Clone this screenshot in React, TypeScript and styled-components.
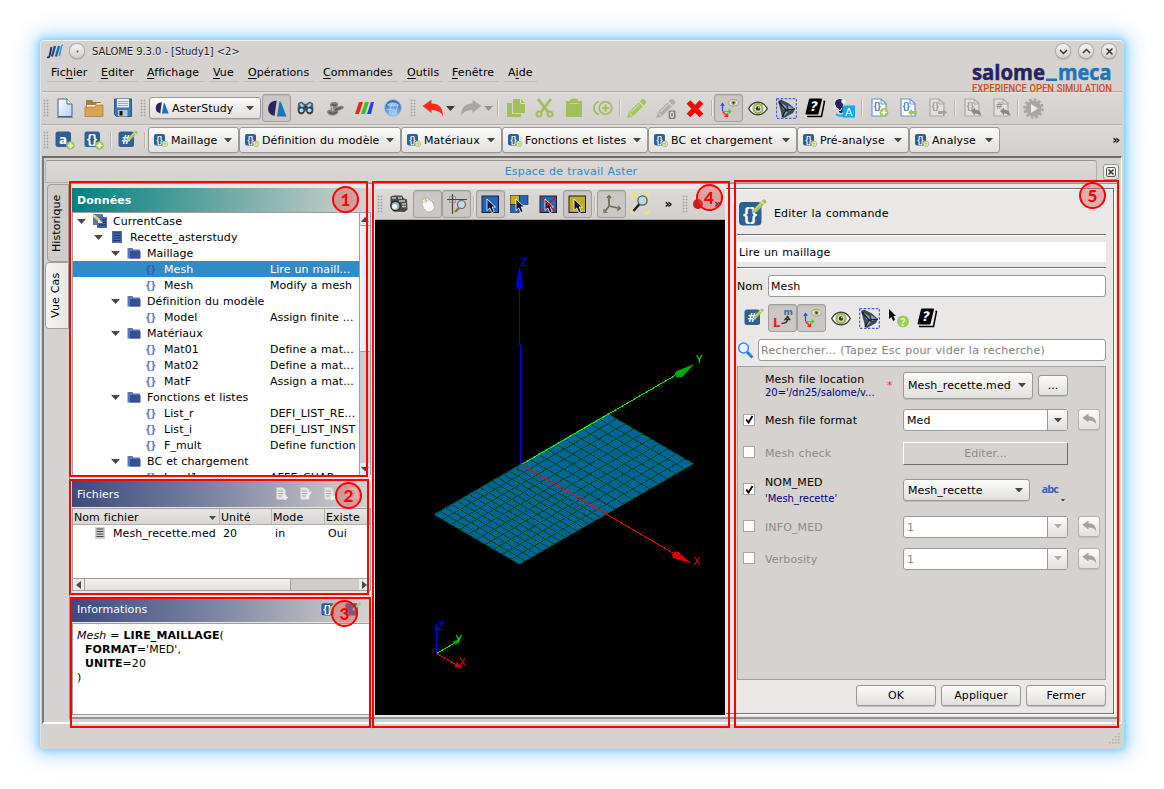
import React from "react";
import styled, { createGlobalStyle, css } from "styled-components";

const Global = createGlobalStyle`
  * { box-sizing: border-box; }
  html, body { margin: 0; padding: 0; background: #fff; }
  body { font-family: "DejaVu Sans", sans-serif; font-size: 11px; letter-spacing: 0.07px; word-spacing: 0.4px; color: #000; overflow: hidden; }
`;

const Page = styled.div`
  position: relative;
  width: 1164px;
  height: 789px;
  padding: 40px 39px 40px 40px;
  overflow: hidden;
`;

const Window = styled.div`
  width: 1084px;
  height: 709px;
  background: #d6d2cf;
  border-radius: 5px;
  display: flex;
  flex-direction: column;
  padding: 0 2px;
  box-shadow: inset 0 1px 0 #f4f3f2, inset 1px 0 0 #e4e2e0, 0 0 5px 1px #80cffc, 0 0 12px 4px #a9dffe, 0 0 24px 10px #dfecff;
`;

const TitleBar = styled.div`
  height: 22px;
  display: flex;
  align-items: center;
  padding: 0 6px 0 5px;
  flex: none;
`;

const TitleText = styled.span`
  font-size: 10px;
  letter-spacing: -0.06px;
  word-spacing: 0;
  margin-left: 8px;
  flex: 1;
  text-shadow: 0 1px 1px #fff;
  color: #222;
  white-space: pre;
`;

const RoundButton = styled.span`
  width: 14px;
  height: 14px;
  border-radius: 50%;
  margin-left: 9px;
  background: linear-gradient(#f6f5f4, #d3d0cd);
  box-shadow: 0 0 0 1px #b0adaa, 0 1px 2px #777;
  display: flex;
  align-items: center;
  justify-content: center;
  &:first-of-type { margin-left: 7px; }
`;

const HeaderArea = styled.div`
  height: 29px;
  flex: none;
  display: flex;
  justify-content: space-between;
  padding: 0 9px 0 5px;
`;

const MenuBar = styled.div`
  display: flex;
  gap: 5px;
  height: 20px;
`;

const MenuItem = styled.span<{ $w: number }>`
  width: ${(p) => p.$w}px;
  padding-left: 4px;
  line-height: 21px;
  border-bottom: 1px solid #c0bcb9;
  white-space: pre;
  u { text-underline-offset: 2px; }
`;

const ToolBar = styled.div<{ $h: number; $lift?: number }>`
  height: ${(p) => p.$h}px;
  padding-bottom: ${(p) => p.$lift ?? 0}px;
  flex: none;
  display: flex;
  align-items: center;
  border-top: 1px solid #b0adaa;
  box-shadow: inset 0 1px 0 #e6e4e2;
  background: linear-gradient(#dbd8d5, #d3cfcc);
`;

const Handle = styled.span<{ $w: number }>`
  width: ${(p) => p.$w}px;
  height: 18px;
  flex: none;
  background-image: radial-gradient(circle, #a29e9b 0.8px, transparent 1.1px);
  background-size: 3px 3px;
  background-clip: content-box;
  background-origin: content-box;
  padding: 0 ${(p) => (p.$w - 6) / 2}px;
`;

const Slot = styled.span<{ $on?: boolean; $w?: number }>`
  width: ${(p) => p.$w ?? 29}px;
  height: 28px;
  flex: none;
  display: flex;
  align-items: center;
  justify-content: center;
  border-radius: 3px;
  ${(p) =>
    p.$on &&
    css`
      border: 1px solid #a09d9a;
      background: #cac7c5;
      box-shadow: inset 0 1px 1px #bbb7b4;
    `}
`;

const Sep = styled.span<{ $w: number }>`
  width: ${(p) => p.$w}px;
  height: 16px;
  flex: none;
  display: flex;
  justify-content: center;
  &::before {
    content: "";
    width: 2px;
    background: linear-gradient(90deg, #b8b4b1 50%, #eceae9 50%);
  }
`;

const Gap = styled.span<{ $w: number }>`
  width: ${(p) => p.$w}px;
  flex: none;
`;

const raised = css`
  background: linear-gradient(#fbfbfa, #e2e0de);
  border: 1px solid #9a9794;
  border-radius: 3px;
  box-shadow: 0 1px 0 #c0bcb9;
`;

const Combo = styled.div<{ $w: number; $h: number }>`
  ${raised}
  width: ${(p) => p.$w}px;
  height: ${(p) => p.$h}px;
  flex: none;
  display: flex;
  align-items: center;
  justify-content: space-between;
  padding: 0 6px 0 4px;
  white-space: pre;
`;

const ComboLabel = styled.span`
  display: flex;
  align-items: center;
  gap: 3px;
  padding-left: 1px;
`;

const More = styled.span`
  font-weight: bold;
  font-size: 12px;
  line-height: 14px;
`;

const Frame = styled.div`
  flex: none;
  height: 568px;
  width: 1080px;
  border-top: 2px solid #6d6c69;
  border-left: 2px solid #7b7977;
  border-bottom: 2px solid #fff;
  border-right: 1px solid #fff;
  display: flex;
  flex-direction: column;
  padding: 2px 2px 0 1px;
`;

const TitleRow = styled.div`
  height: 23px;
  flex: none;
  display: flex;
  align-items: center;
  gap: 6px;
`;

const WorkspaceTab = styled.div`
  width: 1052px;
  height: 23px;
  border: 1px solid #b0adaa;
  border-top-color: #98948f;
  border-radius: 3px 3px 0 0;
  background: linear-gradient(#dcd9d6, #d4d0cd);
  color: #2f8bc6;
  text-align: center;
  line-height: 21px;
  letter-spacing: 0.18px;
`;

const CloseBox = styled.span`
  ${raised}
  width: 16px;
  height: 16px;
  display: flex;
  align-items: center;
  justify-content: center;
`;

const WorkspaceBody = styled.div`
  flex: 1;
  display: flex;
  min-height: 0;
`;

const TabColumn = styled.div`
  width: 24px;
  display: flex;
  flex-direction: column;
  align-items: flex-end;
  padding-top: 1px;
`;

const SideTab = styled.div<{ $h: number; $active?: boolean }>`
  width: ${(p) => (p.$active ? 24 : 22)}px;
  height: ${(p) => p.$h}px;
  border: 1px solid #a09d9a;
  border-radius: 0 4px 4px 0;
  background: ${(p) => (p.$active ? "linear-gradient(90deg, #e9e8e6, #f5f4f3)" : "#cfccc9")};
  writing-mode: vertical-rl;
  transform: rotate(180deg);
  text-align: center;
  line-height: ${(p) => (p.$active ? 20 : 18)}px;
  letter-spacing: 0.1px;
`;

const Workspace = styled.div`
  width: 1051px;
  height: 536px;
  border: 1px solid #98948f;
  border-bottom-width: 2px;
  background: #e9e8e6;
  display: flex;
`;

const LeftColumn = styled.div`
  width: 301px;
  flex: none;
  padding: 4px 0 0 2px;
  display: flex;
  flex-direction: column;
`;

const DockHeader = styled.div<{ $from: string; $h: number; $bold?: boolean; $mid?: string }>`
  height: ${(p) => p.$h}px;
  flex: none;
  width: 299px;
  background: linear-gradient(90deg, ${(p) => p.$from}, ${(p) => p.$mid} 50%, #d6d2cf);
  color: #fff;
  font-weight: ${(p) => (p.$bold ? "bold" : "normal")};
  display: flex;
  align-items: center;
  justify-content: space-between;
  padding: 0 10px 0 5px;
`;

const HeaderIcons = styled.span<{ $gap: number }>`
  display: flex;
  gap: ${(p) => p.$gap}px;
  align-items: center;
`;

const Tree = styled.div`
  height: 263px;
  width: 299px;
  flex: none;
  border: 1px solid #a09d9a;
  border-bottom: none;
  display: flex;
  background: #fff;
  overflow: hidden;
`;

const TreeRows = styled.div`
  flex: 1;
`;

const TreeRow = styled.div<{ $selected?: boolean; $level: number }>`
  display: flex;
  align-items: center;
  height: 16px;
  width: 286px;
  padding-left: ${(p) => 3 + p.$level * 17}px;
  background: ${(p) => (p.$selected ? "#308cc6" : "transparent")};
  color: ${(p) => (p.$selected ? "#fff" : "#000")};
  white-space: pre;
`;

const TreeArrow = styled.span`
  width: 11px;
  flex: none;
  display: flex;
  justify-content: center;
`;

const TreeIcon = styled.span`
  width: 26px;
  flex: none;
  display: flex;
  justify-content: center;
`;

const TreeText = styled.span<{ $level: number }>`
  width: ${(p) => 157 - p.$level * 17}px;
  flex: none;
`;

const VScroll = styled.div`
  width: 11px;
  flex: none;
  border-left: 1px solid #a09d9a;
  background: #cfccc9;
  display: flex;
  flex-direction: column;
`;

const ScrollEnd = styled.span`
  height: 12px;
  flex: none;
  background: #eceae9;
  display: flex;
  align-items: center;
  justify-content: center;
`;

const VThumb = styled.span`
  height: 127px;
  border: solid #a09d9a;
  border-width: 1px 0;
  background: linear-gradient(90deg, #f6f5f4, #e2e0de);
`;

const Spacer = styled.span`
  flex: 1;
`;

const Splitter = styled.div`
  height: 6px;
  flex: none;
  display: flex;
  align-items: center;
  justify-content: center;
  &::before {
    content: "";
    width: 18px;
    height: 3px;
    background-image: radial-gradient(circle, #a8a5a2 0.7px, transparent 1px);
    background-size: 3px 3px;
  }
`;

const HairGap = styled.div<{ $h: number }>`
  height: ${(p) => p.$h}px;
  flex: none;
`;

const Table = styled.div`
  width: 299px;
  height: 83px;
  flex: none;
  border: 1px solid #a09d9a;
  background: #fff;
  display: flex;
  flex-direction: column;
`;

const TableHead = styled.div`
  height: 16px;
  display: flex;
  line-height: 18px;
  background: linear-gradient(#e8e6e4, #d8d5d2);
  border-bottom: 1px solid #b0adaa;
`;

const HeadCell = styled.span<{ $w: number }>`
  width: ${(p) => p.$w}px;
  border-right: 1px solid #b8b5b2;
  padding: 0 3px 0 1px;
  display: flex;
  justify-content: space-between;
  white-space: pre;
  svg { margin-top: 7px; }
`;

const TableRow = styled.div`
  height: 16px;
  display: flex;
  align-items: center;
  white-space: pre;
`;

const Cell = styled.span<{ $w: number; $pad: number; $gap?: number }>`
  width: ${(p) => p.$w}px;
  flex: none;
  padding-left: ${(p) => p.$pad}px;
  display: flex;
  align-items: center;
  gap: ${(p) => p.$gap ?? 0}px;
`;

const HScroll = styled.div`
  height: 12px;
  margin-top: auto;
  display: flex;
  border-top: 1px solid #a09d9a;
  background: #cfccc9;
`;

const HEnd = styled.span`
  width: 11px;
  background: #eceae9;
  display: flex;
  align-items: center;
  justify-content: center;
`;

const HThumb = styled.span`
  width: 207px;
  border: solid #a09d9a;
  border-width: 0 1px;
  background: linear-gradient(#f3f2f1, #e2e0de);
`;

const InfoBox = styled.div`
  width: 299px;
  height: 92px;
  border: 1px solid #a09d9a;
  background: #fff;
  padding: 5px 4px;
  line-height: 14px;
  white-space: pre;
`;

const ViewColumn = styled.div`
  width: 354px;
  flex: none;
  padding: 5px 0 0 4px;
`;

const ViewBar = styled.div`
  width: 350px;
  height: 31px;
  display: flex;
  align-items: center;
  background: linear-gradient(#dcd9d6, #d3cfcc);
  border-bottom: 1px solid #a8a5a2;
`;

const FormFrame = styled.div`
  width: 388px;
  height: 526px;
  margin: 4px 0 0 1px;
  border: solid #74716f;
  border-width: 1px 1px 1px 0;
  box-shadow: inset 0 1px 0 #fff, 1px 1px 0 #fff;
  padding: 9px 7px 0 11px;
`;

const EditorHead = styled.div`
  height: 36px;
  display: flex;
  gap: 5px;
  padding-left: 1px;
  line-height: 32px;
  letter-spacing: 0.15px;
`;

const Rule = styled.div`
  height: 2px;
  border-top: 1px solid #6f6c6a;
  background: #fff;
`;

const Description = styled.div`
  height: 20px;
  margin: 6px 0 5px;
  background: #fff;
  padding-left: 2px;
  line-height: 22px;
  letter-spacing: 0.15px;
`;

const FieldRow = styled.div<{ $mt: number }>`
  display: flex;
  align-items: center;
  justify-content: space-between;
  height: 22px;
  margin-top: ${(p) => p.$mt}px;
`;

const Input = styled.div<{ $w: number; $muted?: boolean }>`
  width: ${(p) => p.$w}px;
  height: 22px;
  border: 1px solid #9a9794;
  border-radius: 3px;
  background: #fff;
  padding-left: 2px;
  line-height: 21px;
  color: ${(p) => (p.$muted ? "#808080" : "#000")};
  letter-spacing: ${(p) => (p.$muted ? 0.26 : 0.09)}px;
  white-space: pre;
`;

const IconRow = styled.div`
  display: flex;
  height: 28px;
  margin-top: 7px;
  padding-left: 2px;
`;

const Params = styled.div`
  height: 314px;
  margin-top: 5px;
  border: 1px solid #a3a09e;
  background: #d6d2cf;
`;

const ParamRow = styled.div<{ $h: number; $muted?: boolean }>`
  height: ${(p) => p.$h}px;
  display: grid;
  grid-template-columns: 27px 118px 20px 165px 32px;
  align-items: center;
  color: ${(p) => (p.$muted ? "#8d8a88" : "#000")};
`;

const Check = styled.span`
  width: 12px;
  height: 12px;
  margin: 0 0 2px 5px;
  border: 1px solid #a8a5a2;
  background: #fff;
  display: flex;
  align-items: center;
  justify-content: center;
`;

const ParamLabel = styled.span<{ $gap?: number }>`
  display: flex;
  flex-direction: column;
  gap: ${(p) => p.$gap ?? 0}px;
  white-space: pre;
  letter-spacing: 0.12px;
`;

const SubLabel = styled.span`
  color: #000080;
  font-size: 10px;
  line-height: 13px;
  letter-spacing: -0.03px;
`;

const Star = styled.span`
  color: #ff2a2a;
  justify-self: start;
  padding-left: 4px;
`;

const Control = styled.span`
  display: flex;
  align-items: center;
  justify-content: space-between;
`;

const EditCombo = styled.div`
  width: 165px;
  height: 22px;
  margin-bottom: 1px;
  border: 1px solid #9a9794;
  border-radius: 3px;
  background: #fff;
  padding-left: 3px;
  display: flex;
  justify-content: space-between;
  line-height: 21px;
`;

const DropEnd = styled.span`
  width: 20px;
  border-left: 1px solid #9a9794;
  background: linear-gradient(#fbfbfa, #e2e0de);
  display: flex;
  align-items: center;
  justify-content: center;
`;

const FlatButton = styled.div`
  width: 165px;
  height: 23px;
  border: 1px solid;
  border-color: #fff #6f6c6a #6f6c6a #fff;
  text-align: center;
  line-height: 22px;
`;

const Push = styled.div<{ $w: number; $h?: number }>`
  ${raised}
  width: ${(p) => p.$w}px;
  height: ${(p) => p.$h ?? 21}px;
  display: flex;
  align-items: center;
  justify-content: center;
`;

const UndoBtn = styled(Push)`
  margin: 0 0 2px 10px;
  border-color: #b5b2af;
`;

const Abc = styled.span`
  display: flex;
  align-items: center;
  color: #3a5fc0;
  font: bold 11px/14px "Open Sans", sans-serif;
  letter-spacing: -0.9px;
  padding: 0 3px 3px 0;
`;

const AbcArrow = styled.span`
  height: 20px;
  margin-bottom: -5px;
  display: flex;
  align-items: flex-end;
  padding-left: 3px;
`;

const Buttons = styled.div`
  display: flex;
  justify-content: flex-end;
  gap: 5px;
  margin-top: 5px;
`;

const StatusBar = styled.div`
  flex: 1;
  display: flex;
  justify-content: flex-end;
  align-items: flex-end;
  padding: 0 2px 5px;
`;

const Outline = styled.div<{ $x: number; $y: number; $w: number; $h: number }>`
  position: absolute;
  left: ${(p) => p.$x}px;
  top: ${(p) => p.$y}px;
  width: ${(p) => p.$w}px;
  height: ${(p) => p.$h}px;
  border: 2px solid #f00;
`;

const Badge = styled.div<{ $x: number; $y: number }>`
  position: absolute;
  left: ${(p) => p.$x}px;
  top: ${(p) => p.$y}px;
  width: 27px;
  height: 27px;
  border: 2px solid #f00;
  border-radius: 50%;
  background: rgba(221, 90, 90, 0.42);
  color: #f00;
  font: 900 17px/23px Lato, sans-serif;
  letter-spacing: 0;
  text-align: center;
`;

const Down = ({ s = 8, c = "#4b4846" }: { s?: number; c?: string }) => (
  <svg width={s} height={s / 2 + 0.5} viewBox="0 0 8 4.5"><path d="M0 0h8L4 4.5z" fill={c} /></svg>
);
const SideArrow = ({ left }: { left?: boolean }) => (
  <svg width="5" height="8" viewBox="0 0 5 8"><path d={left ? "M5 0v8L0 4z" : "M0 0v8l5-4z"} fill="#4b4846" /></svg>
);

const glyphFont = '"DejaVu Sans", sans-serif';
const braceFont = '"Liberation Sans", sans-serif';
const fontFor = (ch: string) => (ch === "{}" ? braceFont : glyphFont);

const Pencil = ({ c = "#a4c557" }: { c?: string }) => (
  <g fill={c}>
    <path d="M1 19l1.400-5.200L12 4.200 15.900 8 6.200 17.600z" />
    <path d="M13 3.200l2-2q1.200-.8 2.400.3l1.400 1.400q1 1.200.1 2.300l-2 2z" />
    <path d="M3 14l3 3M5 13.500l8-8" stroke="#e6efcf" strokeWidth=".9" fill="none" />
  </g>
);

const BlueBox = ({ s = 20, ch, mark }: { s?: number; ch: string; mark: "plus" | "pencil" }) => (
  <svg width={s} height={s} viewBox="0 0 20 20">
    <rect x=".5" y="1.500" width="15.500" height="15.500" rx="2.500" fill="#2f6094" />
    <text x="8" y={ch === "{}" ? 13.3 : 13.5} textAnchor="middle" fontFamily={fontFor(ch)} fontWeight="bold" fontSize={ch === "{}" ? 13 : 12} fill="#fff" letterSpacing="0">{ch}</text>
    {mark === "plus" ? (
      <g><circle cx="15.500" cy="15.500" r="4.300" fill="#a4c557" /><path d="M15.500 12.800v5.400M12.800 15.500h5.400" stroke="#fff" strokeWidth="1.600" /></g>
    ) : (
      <g transform="translate(8.500 0) scale(.58)"><Pencil /></g>
    )}
  </svg>
);

const SmallAdd = () => (
  <svg width="14" height="14" viewBox="0 0 14 14">
    <rect x="0" y="1" width="11" height="11.500" rx="2" fill="#2f6094" />
    <text x="5.500" y="9.500" textAnchor="middle" fontFamily={braceFont} fontWeight="bold" fontSize="9.500" textLength="6" lengthAdjust="spacingAndGlyphs" fill="#fff" letterSpacing="0">{"{}"}</text>
    <circle cx="11" cy="10.800" r="2.700" fill="#f2f6e6" stroke="#a4c557" strokeWidth="1" /><path d="M11 9.300v3M9.500 10.800h3" stroke="#a4c557" />
  </svg>
);

const AsterLogo = ({ s = 20 }: { s?: number }) => (
  <svg width={s} height={s * 0.85} viewBox="0 0 20 17">
    <path d="M9.700 .5L7.500 16Q1 14.500 1 8.500 1.500 1 9.700 .5z" fill="#2a2360" />
    <path d="M10 16.500L12.500 1q1 0 2 2.500L19.500 16.500z" fill="#1b75bb" />
  </svg>
);
const NewDoc = () => (
  <svg width="16" height="20" viewBox="0 0 16 20"><defs><linearGradient id="nd" x1="0" y1="0" x2="1" y2="1"><stop offset="0" stopColor="#fff" /><stop offset="1" stopColor="#b5cff5" /></linearGradient></defs><path d="M1 1h9l5 5v12.500H1z" fill="url(#nd)" stroke="#3d5f94" /><path d="M10 1v5h5" fill="#fff" stroke="#3d5f94" /><path d="M0 19.500h16" stroke="#888" /></svg>
);
const Folder = () => (
  <svg width="20" height="19" viewBox="0 0 20 19"><path d="M2 1h6l1.500 2H17v14H2z" fill="#a87a3c" /><path d="M3 6h9l1-2h4v4H3z" fill="#fff4da" /><path d="M1 8h10l1.500-2H19v11.500H1z" fill="#dba454" stroke="#a87a3c" strokeWidth=".7" /></svg>
);
const Floppy = () => (
  <svg width="18" height="20" viewBox="0 0 18 20"><path d="M.5 1h17v17.500H2.500L.5 16.500z" fill="#3f78b4" stroke="#2a527f" /><rect x="3" y="1" width="12" height="8.500" fill="#e7eef6" /><path d="M4 3.500h10M4 5.500h10M4 7.500h10" stroke="#7e9cbd" strokeWidth=".8" /><rect x="4" y="12" width="9.500" height="6.500" fill="#b9c3cd" /><rect x="5.500" y="13" width="3" height="4.500" fill="#111" /></svg>
);
const Binoculars = () => (
  <svg width="17" height="14" viewBox="0 0 18 15"><path d="M1 2.500L4.500.5 8 3h2l3.500-2.500L17 2.500l.5 7q0 5-4 5-3 0-3.500-3.500H8Q7.500 14.500 4.500 14.500.5 14.500.5 9.500z" fill="#49626f" /><circle cx="4.700" cy="10" r="2.900" fill="#a5dcf8" stroke="#24333c" strokeWidth="1.200" /><circle cx="13.300" cy="10" r="2.900" fill="#a5dcf8" stroke="#24333c" strokeWidth="1.200" /><path d="M3.500 3l3 3M14.500 3l-3 3" stroke="#8fd3f6" strokeWidth="2.600" /><path d="M8 6.500h2" stroke="#1a2328" strokeWidth="2" /></svg>
);
const Geometry = () => (
  <svg width="18" height="15" viewBox="0 0 18 15"><path d="M1 11q0-2.500 4-2.500L4 3q1-2.500 5-2t3 3L11 6l5-1.500q2.500 1 1.500 3L12 10q1 3-4 4.500-6 .5-7-3.500z" fill="#83807e" /><path d="M3 11q3 3 8 0M5.500 3.500q3 1.500 5 0M9 9l6-2.500" stroke="#5a5755" strokeWidth="1.400" fill="none" /><path d="M6 5l1 5" stroke="#b9b6b4" strokeWidth="1.500" /></svg>
);
const Stripes = () => (
  <svg width="20" height="14" viewBox="0 0 20 14"><path d="M1 13L5 1h4L5 13z" fill="#f02020" /><path d="M7 13l4-12h4l-4 12z" fill="#3bc41e" /><path d="M13 13l4-12h3l-3 12z" fill="#2342f0" /></svg>
);
const Globe = () => (
  <svg width="18" height="18" viewBox="0 0 18 18"><defs><radialGradient id="gl" cx=".5" cy=".85" r=".9"><stop offset="0" stopColor="#a9d6fb" /><stop offset=".7" stopColor="#3d7cc8" /><stop offset="1" stopColor="#2c5fae" /></radialGradient></defs><circle cx="9" cy="9" r="8.300" fill="url(#gl)" stroke="#8db4de" strokeWidth=".8" /><path d="M2.500 6Q9 .5 15.500 6 9 9 2.500 6z" fill="#dcecfa" opacity=".6" /><path d="M8 4l-2 6 6 2 2-6M6 10l-4 1M12 12l0 4M6 10l0 5" fill="none" stroke="#e4f0fb" strokeWidth=".5" /></svg>
);
const FlipSvg = styled.svg<{ $flip?: boolean }>`
  transform: ${(p) => (p.$flip ? "scaleX(-1)" : "none")};
`;
const Undo = ({ c = "#ff2a1a", s = 22, flip }: { c?: string; s?: number; flip?: boolean }) => (
  <FlipSvg $flip={flip} width={s} height={s * 0.82} viewBox="0 0 22 18"><path d="M.5 7L9.500.8v3.800q11.500 0 11.500 13-2.500-6.800-11.500-6.600V14z" fill={c} /></FlipSvg>
);
const Copy = () => (
  <svg width="20" height="20" viewBox="0 0 20 20"><path d="M7 1h8l4 4v10H7z" fill="#a3be5c" /><path d="M1 5h5v11h9v3H1z" fill="#a3be5c" /><path d="M14.500 1v4.500H19" fill="none" stroke="#dcd9d6" /></svg>
);
const Cut = () => (
  <svg width="19" height="20" viewBox="0 0 19 20" fill="none" stroke="#a3be5c"><path d="M3 1l10 13M16 1L6 14" strokeWidth="2.800" /><circle cx="4" cy="16" r="2.500" strokeWidth="2" /><circle cx="15" cy="16" r="2.500" strokeWidth="2" /></svg>
);
const Paste = () => (
  <svg width="18" height="20" viewBox="0 0 18 20"><path d="M1 3h4V1.500Q9-.5 13 1.500V3h4v16H1z" fill="#a3be5c" /><path d="M4.500 5.500h9" stroke="#c7d79a" /></svg>
);
const Duplicate = () => (
  <svg width="20" height="16" viewBox="0 0 20 16" fill="none" stroke="#a3be5c"><circle cx="12.500" cy="8" r="6.300" strokeWidth="1.800" /><path d="M12.500 4.500v7M9 8h7" strokeWidth="2.200" /><path d="M6 1.500Q1 3 1 8t5 6.500" strokeWidth="1.800" /></svg>
);
const PencilIcon = ({ gray }: { gray?: boolean }) => (
  <svg width="21" height="21" viewBox="0 0 20 20"><Pencil c={gray ? "#b1aeac" : "#a4c557"} />{gray && <g><rect x="13" y="12" width="6.500" height="8" rx="1" fill="#83807e" /><ellipse cx="16.200" cy="16" rx="1.400" ry="2.500" fill="none" stroke="#ddd" strokeWidth="1.100" /></g>}</svg>
);
const RedX = () => (
  <svg width="20" height="19" viewBox="0 0 20 19"><path d="M3.500 3l13 13.500M16.500 3l-13 13.500" stroke="#f00a0a" strokeWidth="5.400" /></svg>
);
const AxesEye = () => (
  <svg width="20" height="20" viewBox="0 0 20 20" fill="none"><path d="M3.500 13V6M1.800 7.800l1.700-2.300 1.700 2.300" stroke="#2450f0" strokeWidth="1.200" /><path d="M3.500 13.500H11M9.500 11.500l2.200 2-2.200 2" stroke="#23dd23" strokeWidth="1.200" /><path d="M3.500 13.500l4.300 4.300M8.500 15.200v3H5.500" stroke="#f02a2a" strokeWidth="1.400" /><ellipse cx="14.500" cy="4.800" rx="4.700" ry="3.200" fill="#e8ecdc" stroke="#8a8a80" strokeWidth=".8" /><circle cx="14.500" cy="4.800" r="2.300" fill="#8fae44" /><circle cx="14.500" cy="4.800" r="1" fill="#333" /></svg>
);
const Eye = () => (
  <svg width="20" height="15" viewBox="0 0 20 15"><path d="M.7 7.500Q4 1.200 10 1.200t9.300 6.300Q16 13.800 10 13.800T.7 7.500z" fill="#fff" stroke="#3b3b3b" strokeWidth="1.400" /><circle cx="10" cy="7.500" r="4.600" fill="#dfe8c4" stroke="#9ab84e" strokeWidth="2.200" /><circle cx="10" cy="7.500" r="2.300" fill="#333" /><circle cx="10.800" cy="6.700" r=".8" fill="#fff" /></svg>
);
const MeshSelect = () => (
  <svg width="21" height="21" viewBox="0 0 21 21"><rect x=".7" y=".7" width="19.600" height="19.600" fill="none" stroke="#2545d8" strokeDasharray="2.500 1.500" /><path d="M2 3l3-1.500 8 4 6 5.500-2 4-9 5-2-1-1-5z" fill="#414a54" /><path d="M5 5l5 3 1 4-4-1zM12 7l6 4-5 2zM8 13l4 1-4 4z" fill="#86a9cc" /><path d="M3 4l7 8 9-1M10 12l-4 7" stroke="#15181c" strokeWidth="1.200" fill="none" /></svg>
);
const Book = () => (
  <svg width="21" height="20" viewBox="0 0 21 20"><path d="M5 1.500h11l-3.500 14H1.500z" fill="#000" stroke="#000" strokeLinejoin="round" strokeWidth="2" /><path d="M18.500 3l1 .5-3 15H2" fill="none" stroke="#000" strokeWidth="1.500" /><text x="8.500" y="13.500" textAnchor="middle" fontFamily={glyphFont} fontWeight="bold" fontSize="13" fill="#fff" transform="skewX(-12) translate(2.500 0)">?</text></svg>
);
const Translate = () => (
  <svg width="21" height="20" viewBox="0 0 21 20"><path d="M1 5q1-4 5-4 3 0 3 3v10q-2 2-4 0v-3Q1 9 1 5z" fill="#252160" /><circle cx="9.500" cy="3.500" r="2.200" fill="#f4f6fb" /><path d="M3 10l3 3 2-3M1 7v4" stroke="#f4f6fb" fill="none" /><path d="M2 16q3 3 7 1" stroke="#2ba4ea" fill="none" strokeWidth="2" /><rect x="8.500" y="7.500" width="12.500" height="12" fill="#14a7ee" /><text x="14.800" y="17.500" textAnchor="middle" fontFamily={glyphFont} fontSize="11" fill="#fff">A</text></svg>
);
const DocIcon = ({ ch, mark, gray }: { ch: string; mark: "plus" | "left" | "right" | "reply"; gray?: boolean }) => (
  <svg width="18" height="20" viewBox="0 0 18 20">
    <path d="M1 1h9l5 4.500V18H1z" fill={gray ? "#e2e0df" : "#fff"} stroke={gray ? "#aaa7a5" : "#6b94cb"} strokeWidth="1.200" />
    <path d="M10 1v5h5" fill="none" stroke={gray ? "#aaa7a5" : "#6b94cb"} />
    <text x="6.300" y="10.500" textAnchor="middle" fontFamily={fontFor(ch)} fontSize="9" fontWeight="bold" fill={gray ? "#999694" : "#3d6fb5"} letterSpacing="0">{ch}</text>
    {mark === "plus" && <g><circle cx="13" cy="14.500" r="4.400" fill="#a4c557" /><path d="M13 11.800v5.400M10.300 14.500h5.400" stroke="#fff" strokeWidth="1.500" /></g>}
    {mark === "left" && <path d="M8 14.500l4-3.500v2h5v3h-5v2z" fill="#a4c557" />}
    {mark === "right" && <path d="M18 14.500l-4-3.500v2H9v3h5v2z" fill="#a5a2a0" />}
    {mark === "reply" && <path d="M7 13l4-3.500v2q6 0 6.500 7-2.500-3.500-6.500-3v2z" fill="#8b8886" />}
  </svg>
);
const Gear = () => (
  <svg width="21" height="21" viewBox="0 0 21 21"><circle cx="10.500" cy="10.500" r="9" fill="none" stroke="#a9a6a4" strokeWidth="2.500" strokeDasharray="2.700 2" /><circle cx="10.500" cy="10.500" r="8" fill="#a9a6a4" /><path d="M8 6l7 4.500L8 15z" fill="#ebeae9" /></svg>
);
const Braces = ({ sel }: { sel?: boolean }) => (
  <svg width="12" height="14" viewBox="0 0 12 14"><text x="6" y="10.500" textAnchor="middle" fontFamily={braceFont} fontSize="11.500" fontWeight="bold" fill={sel ? "#2f62b4" : "#5876bd"} letterSpacing="0.5">{"{}"}</text></svg>
);
const FolderBlue = () => (
  <svg width="14" height="12" viewBox="0 0 14 12"><path d="M.5 1h5l1 1.500H13V11.500H.5z" fill="#5a76b8" /><path d="M3 4h10.500v7.500H3z" fill="#34509a" /></svg>
);
const StageIcon = ({ gray }: { gray?: boolean }) => (
  <svg width="12" height="13" viewBox="0 0 12 13"><rect x="1" y="0" width="10" height="12" fill={gray ? "#cfcfcf" : "#4b66ab"} /><path d="M2.500 2h7M2.500 4.500h7M2.500 7h7M2.500 9.500h7" stroke={gray ? "#444" : "#1e3066"} strokeWidth="1.200" /></svg>
);
const CaseIcon = () => (
  <svg width="15" height="14" viewBox="0 0 15 14"><path d="M0 0h10v11H0z" fill="#5a76b8" /><path d="M4 3h10v11H4z" fill="#4b66ab" /><path d="M9 6h4M8 8.500h5M6 11h7" stroke="#16213f" strokeWidth="1.200" /><path d="M0 1l6 5" stroke="#c7dc6a" strokeWidth="2.600" /><path d="M5 4l5 5-5 0z" fill="#e8eecf" /></svg>
);
const FileAction = ({ d }: { d: string }) => (
  <svg width="13" height="14" viewBox="0 0 13 14"><path d="M.5.5H7L9.500 3v9.500H.5z" fill="#e4e3e2" /><path d="M2 4h5M2 6.500h5M2 9h4" stroke="#aaa9ad" /><path d={d} stroke="#f2f1f0" strokeWidth="1.700" fill="none" /></svg>
);
const Camera = () => (
  <svg width="19" height="18" viewBox="0 0 19 18"><path d="M1.500 1.500L5 .5h8l2 3 3 1 .5 10-3 2.500-11-.5-3-6z" fill="#474b4a" /><path d="M3 3h4M9 3h4M10 6h6M13 9h4M13 11.500h4" stroke="#c3c7c5" strokeWidth="1.300" /><circle cx="6.500" cy="11" r="4.600" fill="#9bb0b5" stroke="#252827" strokeWidth="1.300" /><circle cx="5.700" cy="11.500" r="2.500" fill="#f0fafa" /></svg>
);
const Mouse = () => (
  <svg width="16" height="17" viewBox="0 0 16 17"><path d="M4 2q4-1 6 2 5 3 4.500 8-2 4.500-7 4Q2 13 2 8 2 4 4 2z" fill="#f7f7f7" stroke="#a5a4a3" strokeWidth=".8" /><path d="M3 6q4 1 6-2" stroke="#c5c4c3" fill="none" /><path d="M5 2q0 3 2 3" stroke="#d6ac36" fill="none" strokeWidth="1.200" /></svg>
);
const CrossZoom = () => (
  <svg width="20" height="20" viewBox="0 0 20 20" fill="none"><path d="M5.500 0v20M0 5.500h20" stroke="#444" strokeWidth="1.200" /><path d="M2.500 2.500h6v6h-6z" stroke="#777" strokeWidth=".6" /><path d="M12 14l-4 4" stroke="#8a7432" strokeWidth="2.400" /><circle cx="14.500" cy="10.500" r="4" fill="#bcdce0" stroke="#667" strokeWidth="1.200" /></svg>
);
const Cursor = ({ x = 6, y = 4 }: { x?: number; y?: number }) => (
  <path transform={`translate(${x} ${y})`} d="M0 0l8.500 8H5.200l2 4.500-2.400 1.200-2-4.700L0 11.500z" fill="#17173a" stroke="#fff" strokeWidth=".8" />
);
const SelectIcon = ({ kind }: { kind: "blue" | "mix" | "cross" | "yellow" }) => (
  <svg width="19" height="19" viewBox="0 0 19 19">
    {kind === "mix" ? (
      <g><rect x=".5" y=".5" width="9" height="9" fill="#c7b11b" stroke="#222" strokeWidth=".6" /><rect x="9.500" y=".5" width="8.500" height="9" fill="#1f66bd" stroke="#222" strokeWidth=".6" /><rect x=".5" y="9.500" width="9" height="8" fill="#1f66bd" stroke="#222" strokeWidth=".6" /></g>
    ) : (
      <rect x="1" y="1" width="16.500" height="16.500" fill={kind === "yellow" ? "#c1ac1a" : "#1f66bd"} stroke="#18202c" />
    )}
    {kind === "cross" && <path d="M1.500 1.500l15.500 15.500M17 1.500L1.500 17" stroke="#d8122a" strokeWidth="1.300" />}
    <Cursor />
    {kind === "cross" && <path d="M6 6l8 8M12 6.500L6 12.500" stroke="#d8122a" strokeWidth="1" />}
  </svg>
);
const Trihedron = () => (
  <svg width="18" height="18" viewBox="0 0 18 18" fill="none" stroke="#6c6c50" strokeWidth="1.700"><path d="M6 11V2M6 11l11 2.500M6 11l-4 5.500" /><path d="M3.800 3L6 .5 8.200 3M15 11l2.500 2.500L14 15.500M1 14v3.500h3.500" strokeWidth="1.200" /></svg>
);
const FitZoom = () => (
  <svg width="19" height="20" viewBox="0 0 19 20" fill="none"><path d="M.8 5V.8H5M14 .8h4.200V5M.8 15v4.200H5M14 19.200h4.200V15" stroke="#f5f02c" strokeWidth="1.500" /><path d="M8.500 10L2.500 17" stroke="#222" strokeWidth="2.500" /><circle cx="11.500" cy="6.500" r="4.600" fill="#b9dbe0" stroke="#556" strokeWidth="1.300" /></svg>
);
const LinkM = () => (
  <svg width="20" height="20" viewBox="0 0 20 20"><text x="0" y="19" fontFamily={glyphFont} fontWeight="bold" fontSize="11.500" fill="#f01a1a">L</text><text x="10.500" y="7" fontFamily={glyphFont} fontWeight="bold" fontSize="9" fill="#3a6ea5">m</text><path d="M8.500 15.500q6 0 6-4.500M12.200 11.500l2.400-3 2 3z" fill="none" stroke="#333" strokeWidth="1.400" /></svg>
);
const CursorHelp = () => (
  <svg width="22" height="20" viewBox="0 0 22 20"><path d="M1 1l7 7H5.500l1.500 4-2 1-1.500-4L1 11z" fill="#000" /><circle cx="15" cy="13.500" r="6" fill="#9cc95a" /><text x="15" y="17.500" textAnchor="middle" fontFamily={glyphFont} fontWeight="bold" fontSize="10" fill="#e6f3d2">?</text></svg>
);
const SearchIcon = () => (
  <svg width="17" height="17" viewBox="0 0 17 17" fill="none"><path d="M10 10l5.500 5.500" stroke="#1c7ef0" strokeWidth="2.800" /><circle cx="6.500" cy="6" r="4.900" fill="#e6f2fc" stroke="#2f8cf2" strokeWidth="1.500" /></svg>
);
const TickIcon = () => (
  <svg width="9" height="9" viewBox="0 0 9 9"><path d="M1.200 4.500L3.500 7.500 7.500 1" fill="none" stroke="#000" strokeWidth="1.900" /></svg>
);
const Grip = () => (
  <svg width="12" height="12" viewBox="0 0 12 12" fill="#a8a4a1">{[[10, 1], [7, 4], [10, 4], [4, 7], [7, 7], [10, 7], [1, 10], [4, 10], [7, 10], [10, 10]].map(([x, y]) => <rect key={`${x}-${y}`} x={x} y={y} width="1.400" height="1.400" />)}</svg>
);
const AppIcon = () => (
  <svg width="16" height="15" viewBox="0 0 16 15" fill="none"><path d="M0 13q2 1 2.500-1l2-9" stroke="#2a2360" strokeWidth="1.800" /><path d="M5 12.500L8 2" stroke="#27408c" strokeWidth="2.200" /><path d="M9 12.500l3-10.500" stroke="#1d68b0" strokeWidth="2.400" /><path d="M12.500 12L14 4q.5-3 2-2.500" stroke="#3a9ad6" strokeWidth="1.600" /></svg>
);

const LogoSvg = styled.svg`
  position: relative;
  overflow: visible;
`;
const Logo = () => (
  <LogoSvg width="142" height="29" viewBox="0 0 142 29">
    <g fontFamily='"Open Sans", sans-serif' fontWeight="bold" letterSpacing="0">
      <text x="1" y="18.300" fontSize="21.500" textLength="73" lengthAdjust="spacingAndGlyphs" fill="#262261" stroke="#262261" strokeWidth=".5">salome</text>
      <text x="87" y="18.300" fontSize="21.500" textLength="53.500" lengthAdjust="spacingAndGlyphs" fill="#1b75bb" stroke="#1b75bb" strokeWidth=".5">meca</text>
    </g>
    <rect x="75" y="16.500" width="11" height="2.500" fill="#1b75bb" />
    <text x="1" y="29.500" fontSize="10" letterSpacing="0" fontFamily="Roboto, sans-serif" fontWeight="500" textLength="140" lengthAdjust="spacingAndGlyphs" fill="#c9501f">EXPERIENCE OPEN SIMULATION</text>
  </LogoSvg>
);

const range = (n: number) => Array.from({ length: n + 1 }, (_, i) => i / n);
const L = [434, 514.5], O = [521, 464.3], T = [608, 413.8], B = [519.500, 564.3], M = [606.5, 514.3], R = [693.5, 463.8];
const mix = (a: number[], b: number[], t: number) => [a[0] + (b[0] - a[0]) * t, a[1] + (b[1] - a[1]) * t];
const seg = (a: number[], b: number[]) => `M${a[0].toFixed(1)} ${a[1].toFixed(1)}L${b[0].toFixed(1)} ${b[1].toFixed(1)}`;
const gridPath = [
  ...range(10).map((t) => seg(mix(L, B, t), mix(T, R, t))),
  ...range(15).map((t) => seg(mix(L, O, t), mix(B, M, t))),
  ...range(10).map((t) => seg(mix(O, T, t), mix(M, R, t))),
].join("");

const SceneSvg = styled.svg`
  display: block;
  background: #000;
  letter-spacing: 0;
`;
const Scene = () => (
  <SceneSvg width="350" height="495" viewBox="375 220 350 495" fontFamily='"Liberation Sans", sans-serif'>
    <path d={`M${L}L${T}L${R}L${B}z`} fill="#006699" />
    <g shapeRendering="crispEdges" fill="none">
      <path d={gridPath} stroke="#0a4a1c" />
      <path d="M521.500 464.500L675 375.500" stroke="#0f0" />
      <path d="M521.500 464.500L673 553" stroke="#f00" />
      <path d="M436.500 653.500L454 643.500" stroke="#0f0" />
      <path d="M436.500 653.500L456 664.500" stroke="#f00" />
      <g fill="#00f">
        <rect x="520" y="345" width="1" height="119" />
        <rect x="519" y="288" width="1" height="57" />
        <rect x="436" y="629" width="1" height="25" />
      </g>
    </g>
    <path d="M519.500 266l3.700 20-1.700 3h-4l-1.700-3z" fill="#0000d8" />
    <path d="M694.500 364l-12 13-6 .5-2-4 2-2.500z" fill="#00a800" />
    <path d="M691.500 563.500l-13.500-12-4 .5-2 3 1 3z" fill="#dc0000" />
    <path d="M436.500 623l2.500 7h-5z" fill="#0000e0" />
    <path d="M461 638l-4 6-3 .5-1-3z" fill="#00a000" />
    <path d="M463 668.500l-9-1.500 3-5z" fill="#dc0000" />
    <g fontSize="10">
      <text x="521" y="265.500" fill="#00f">Z</text>
      <text x="696" y="363" fill="#0f0">Y</text>
      <text x="693.500" y="565" fill="#f00">X</text>
      <text x="438" y="629.500" fill="#00f">Z</text>
      <text x="455.500" y="643" fill="#0f0">Y</text>
      <text x="459" y="665.500" fill="#f00">X</text>
    </g>
  </SceneSvg>
);

type MenuDef = [string, string, string, number];
const menus: MenuDef[] = [
  ["Fic", "h", "ier", 45], ["", "E", "diter", 41], ["", "A", "ffichage", 61], ["", "V", "ue", 30], ["", "O", "pérations", 70],
  ["", "C", "ommandes", 79], ["", "O", "utils", 40], ["", "F", "enêtre", 51], ["A", "i", "de", 33],
];
const categories: [string, number][] = [
  ["Maillage", 91], ["Définition du modèle", 162], ["Matériaux", 101], ["Fonctions et listes", 146], ["BC et chargement", 149], ["Pré-analyse", 112], ["Analyse", 91],
];
type Item = { l: number; t: string; d?: string; sel?: boolean };
const tree: Item[] = [
  { l: 0, t: "CurrentCase" }, { l: 1, t: "Recette_asterstudy" }, { l: 2, t: "Maillage" },
  { l: 3, t: "Mesh", d: "Lire un maill...", sel: true }, { l: 3, t: "Mesh", d: "Modify a mesh" },
  { l: 2, t: "Définition du modèle" }, { l: 3, t: "Model", d: "Assign finite ..." },
  { l: 2, t: "Matériaux" }, { l: 3, t: "Mat01", d: "Define a mat..." }, { l: 3, t: "Mat02", d: "Define a mat..." }, { l: 3, t: "MatF", d: "Assign a mat..." },
  { l: 2, t: "Fonctions et listes" }, { l: 3, t: "List_r", d: "DEFI_LIST_RE..." }, { l: 3, t: "List_i", d: "DEFI_LIST_INST" }, { l: 3, t: "F_mult", d: "Define function" },
  { l: 2, t: "BC et chargement" }, { l: 3, t: "Load1", d: "AFFE_CHAR..." },
];
const TreeGlyph = ({ item }: { item: Item }) => {
  if (item.l === 0) return <CaseIcon />;
  if (item.l === 1) return <StageIcon />;
  if (item.l === 2) return <FolderBlue />;
  return <Braces sel={item.sel} />;
};

const outlines = [[69, 181, 299, 296], [69, 479, 300, 116], [70, 597, 301, 131], [372, 181, 358, 547], [734, 180, 385, 548]];
const badges = [[332, 185.5], [335, 482], [331, 600], [695.5, 184], [1079, 181.5]];

const MainToolbar = () => (
  <ToolBar $h={33}>
    <Handle $w={8} />
    <Slot><NewDoc /></Slot><Slot><Folder /></Slot><Slot><Floppy /></Slot>
    <Handle $w={12} />
    <Combo $w={112} $h={22}><ComboLabel><AsterLogo s={14} />AsterStudy</ComboLabel><Down /></Combo>
    <Gap $w={1} />
    <Slot $on><AsterLogo /></Slot><Slot><Binoculars /></Slot><Slot><Geometry /></Slot><Slot><Stripes /></Slot><Slot><Globe /></Slot>
    <Handle $w={12} />
    <Slot $w={27}><Undo /></Slot><Slot $w={9}><Down s={9} c="#3b3836" /></Slot><Gap $w={2} /><Slot $w={27}><Undo flip c="#a9a6a4" /></Slot><Slot $w={9}><Down s={9} c="#94918f" /></Slot><Gap $w={2} />
    <Sep $w={6} />
    <Slot><Copy /></Slot><Slot><Cut /></Slot><Slot><Paste /></Slot><Slot><Duplicate /></Slot>
    <Sep $w={5} />
    <Slot><PencilIcon /></Slot><Slot><PencilIcon gray /></Slot><Slot><RedX /></Slot>
    <Sep $w={5} />
    <Slot $on><AxesEye /></Slot><Slot><Eye /></Slot><Slot><MeshSelect /></Slot><Slot><Book /></Slot><Slot><Translate /></Slot>
    <Sep $w={6} />
    <Slot><DocIcon ch="{}" mark="plus" /></Slot><Slot><DocIcon ch="{}" mark="left" /></Slot><Slot><DocIcon ch="{}" mark="right" gray /></Slot>
    <Sep $w={6} />
    <Slot><DocIcon ch="{}" mark="reply" gray /></Slot><Slot><DocIcon ch="#" mark="reply" gray /></Slot>
    <Sep $w={3} />
    <Slot><Gear /></Slot>
  </ToolBar>
);

const CategoryToolbar = () => (
  <ToolBar $h={32} $lift={1}>
    <Handle $w={8} />
    <Slot><BlueBox ch="a" mark="plus" /></Slot><Slot><BlueBox ch="{}" mark="plus" /></Slot>
    <Sep $w={5} />
    <Slot><BlueBox ch="#" mark="pencil" /></Slot>
    <Sep $w={6} />
    {categories.map(([name, w]) => (
      <Combo key={name} $w={w} $h={26}><ComboLabel><SmallAdd />{name}</ComboLabel><Down /></Combo>
    ))}
    <Spacer />
    <More>»</More><Gap $w={2} />
  </ToolBar>
);

const LeftDocks = () => (
  <LeftColumn>
    <DockHeader $from="#008080" $mid="#6aa8a4" $h={24} $bold>Données</DockHeader>
    <Tree>
      <TreeRows>
        {tree.map((it, i) => (
          <TreeRow key={i} $level={it.l} $selected={it.sel}>
            <TreeArrow>{it.l < 3 && <Down s={9} />}</TreeArrow>
            <TreeIcon><TreeGlyph item={it} /></TreeIcon>
            <TreeText $level={it.l}>{it.t}</TreeText>
            {it.d}
          </TreeRow>
        ))}
      </TreeRows>
      <VScroll>
        <ScrollEnd><svg width="8" height="5"><path d="M0 5h8L4 0z" fill="#4b4846" /></svg></ScrollEnd>
        <VThumb />
        <Spacer />
        <ScrollEnd><Down /></ScrollEnd>
      </VScroll>
    </Tree>
    <Splitter />
    <DockHeader $from="#3c4a80" $mid="#8088a4" $h={26}>
      Fichiers
      <HeaderIcons $gap={11}>
        <FileAction d="M9.500 8v5M7 10.500h5" /><FileAction d="M6 11l5-6" /><FileAction d="M7 9l4 4M11 9l-4 4" /><FileAction d="M4 2q5 1 6 9" />
      </HeaderIcons>
    </DockHeader>
    <HairGap $h={1} />
    <Table>
      <TableHead>
        <HeadCell $w={147}>Nom fichier<Down s={7} /></HeadCell><HeadCell $w={52}>Unité</HeadCell><HeadCell $w={53}>Mode</HeadCell><HeadCell $w={45}>Existe</HeadCell>
      </TableHead>
      <TableRow>
        <Cell $w={147} $pad={21} $gap={7}><StageIcon gray />Mesh_recette.med</Cell>
        <Cell $w={52} $pad={3}>20</Cell><Cell $w={53} $pad={3}>in</Cell><Cell $w={40} $pad={3}>Oui</Cell>
      </TableRow>
      <HScroll><HEnd><SideArrow left /></HEnd><HThumb /><Spacer /><HEnd><SideArrow /></HEnd></HScroll>
    </Table>
    <HairGap $h={6} />
    <DockHeader $from="#3c4a80" $mid="#8088a4" $h={25}>
      Informations
      <HeaderIcons $gap={8}><BlueBox s={16} ch="{}" mark="pencil" /><BlueBox s={16} ch="" mark="pencil" /></HeaderIcons>
    </DockHeader>
    <HairGap $h={1} />
    <InfoBox>
      <div><i>Mesh</i> = <b>LIRE_MAILLAGE</b>(</div>
      <div>{"  "}<b>FORMAT</b>='MED',</div>
      <div>{"  "}<b>UNITE</b>=20</div>
      <div>)</div>
    </InfoBox>
  </LeftColumn>
);

const View3D = () => (
  <ViewColumn>
    <ViewBar>
      <Handle $w={9} />
      <Slot><Camera /></Slot><Slot $on><Mouse /></Slot><Slot $on><CrossZoom /></Slot>
      <Sep $w={5} />
      <Slot $on><SelectIcon kind="blue" /></Slot><Slot><SelectIcon kind="mix" /></Slot><Slot><SelectIcon kind="cross" /></Slot><Slot $on><SelectIcon kind="yellow" /></Slot>
      <Sep $w={5} />
      <Slot $on><Trihedron /></Slot><Slot><FitZoom /></Slot>
      <Slot $w={27}><More>»</More></Slot>
      <Handle $w={6} />
      <Slot $w={19}><svg width="12" height="12"><circle cx="6" cy="6" r="5" fill="#c02020" /></svg></Slot>
      <Slot $w={22}><More>»</More></Slot>
    </ViewBar>
    <Scene />
  </ViewColumn>
);

const CommandEditor = () => (
  <FormFrame>
    <EditorHead>
      <svg width="31" height="29" viewBox="0 0 31 29"><rect x="1" y="4" width="22.500" height="23.500" rx="4" fill="#2f6094" /><text x="12" y="21.500" textAnchor="middle" fontFamily={braceFont} fontWeight="bold" fontSize="18" fill="#fff" letterSpacing="0">{"{}"}</text><g transform="translate(13.500 .5) scale(.78)"><Pencil /></g></svg>
      <span>Editer la commande</span>
    </EditorHead>
    <Rule />
    <Description>Lire un maillage</Description>
    <Rule />
    <FieldRow $mt={6}>Nom<Input $w={338}>Mesh</Input></FieldRow>
    <IconRow>
      <Slot><BlueBox ch="#" mark="pencil" /></Slot><Slot $on><LinkM /></Slot><Slot $on><AxesEye /></Slot><Slot><Eye /></Slot><Slot><MeshSelect /></Slot><Slot><CursorHelp /></Slot><Slot><Book /></Slot>
    </IconRow>
    <FieldRow $mt={7}><SearchIcon /><Input $w={348} $muted>Rechercher... (Tapez Esc pour vider la recherche)</Input></FieldRow>
    <Params>
      <ParamRow $h={37}>
        <span /><ParamLabel>Mesh file location<SubLabel>20='/dn25/salome/v...</SubLabel></ParamLabel><Star>*</Star>
        <Control><Combo $w={130} $h={27}>Mesh_recette.med<Down /></Combo><Push $w={30}>...</Push></Control>
      </ParamRow>
      <ParamRow $h={33}>
        <Check><TickIcon /></Check><ParamLabel>Mesh file format</ParamLabel><span /><EditCombo>Med<DropEnd><Down /></DropEnd></EditCombo><UndoBtn $w={22}><Undo s={15} c="#a3a09e" /></UndoBtn>
      </ParamRow>
      <ParamRow $h={32} $muted><Check /><ParamLabel>Mesh check</ParamLabel><span /><FlatButton>Editer...</FlatButton></ParamRow>
      <ParamRow $h={42}>
        <Check><TickIcon /></Check><ParamLabel $gap={3}>NOM_MED<SubLabel>'Mesh_recette'</SubLabel></ParamLabel><span />
        <Control><Combo $w={127} $h={22}>Mesh_recette<Down /></Combo><Abc>abc<AbcArrow><Down s={4} c="#222" /></AbcArrow></Abc></Control>
      </ParamRow>
      <ParamRow $h={32} $muted><Check /><ParamLabel>INFO_MED</ParamLabel><span /><EditCombo>1<DropEnd><Down c="#b0adab" /></DropEnd></EditCombo><UndoBtn $w={22}><Undo s={15} c="#a3a09e" /></UndoBtn></ParamRow>
      <ParamRow $h={32} $muted><Check /><ParamLabel>Verbosity</ParamLabel><span /><EditCombo>1<DropEnd><Down c="#b0adab" /></DropEnd></EditCombo><UndoBtn $w={22}><Undo s={15} c="#a3a09e" /></UndoBtn></ParamRow>
    </Params>
    <Buttons><Push $w={80}>OK</Push><Push $w={80}>Appliquer</Push><Push $w={80}>Fermer</Push></Buttons>
  </FormFrame>
);

export default function App() {
  return (
    <Page>
      <Global />
      <Window>
        <TitleBar>
          <AppIcon />
          <RoundButton><svg width="3" height="3"><circle cx="1.500" cy="1.500" r="1" fill="#555" /></svg></RoundButton>
          <TitleText>SALOME 9.3.0 - [Study1] &lt;2&gt;</TitleText>
          {["M1 3l3.500 3.500L8 3", "M1 6l3.500-3.500L8 6", "M1.500 1.500l6 6M7.500 1.500l-6 6"].map((d) => (
            <RoundButton key={d}><svg width="9" height="9"><path d={d} fill="none" stroke="#333" strokeWidth="1.400" /></svg></RoundButton>
          ))}
        </TitleBar>
        <HeaderArea>
          <MenuBar>
            {menus.map(([a, u, b, w]) => <MenuItem key={a + u + b} $w={w}>{a}<u>{u}</u>{b}</MenuItem>)}
          </MenuBar>
          <Logo />
        </HeaderArea>
        <MainToolbar />
        <CategoryToolbar />
        <Frame>
          <TitleRow>
            <WorkspaceTab>Espace de travail Aster</WorkspaceTab>
            <CloseBox><svg width="10" height="10"><rect x=".5" y=".5" width="9" height="9" rx="1.500" fill="none" stroke="#555" /><path d="M2.500 2.500l5 5M7.500 2.500l-5 5" stroke="#333" strokeWidth="1.500" /></svg></CloseBox>
          </TitleRow>
          <WorkspaceBody>
            <TabColumn><SideTab $h={78}>Historique</SideTab><SideTab $h={67} $active>Vue Cas</SideTab></TabColumn>
            <Workspace><LeftDocks /><View3D /><CommandEditor /></Workspace>
          </WorkspaceBody>
        </Frame>
        <StatusBar><Grip /></StatusBar>
      </Window>
      {outlines.map(([x, y, w, h]) => <Outline key={`${x}-${y}`} $x={x} $y={y} $w={w} $h={h} />)}
      {badges.map(([x, y], i) => <Badge key={x} $x={x} $y={y}>{i + 1}</Badge>)}
    </Page>
  );
}
